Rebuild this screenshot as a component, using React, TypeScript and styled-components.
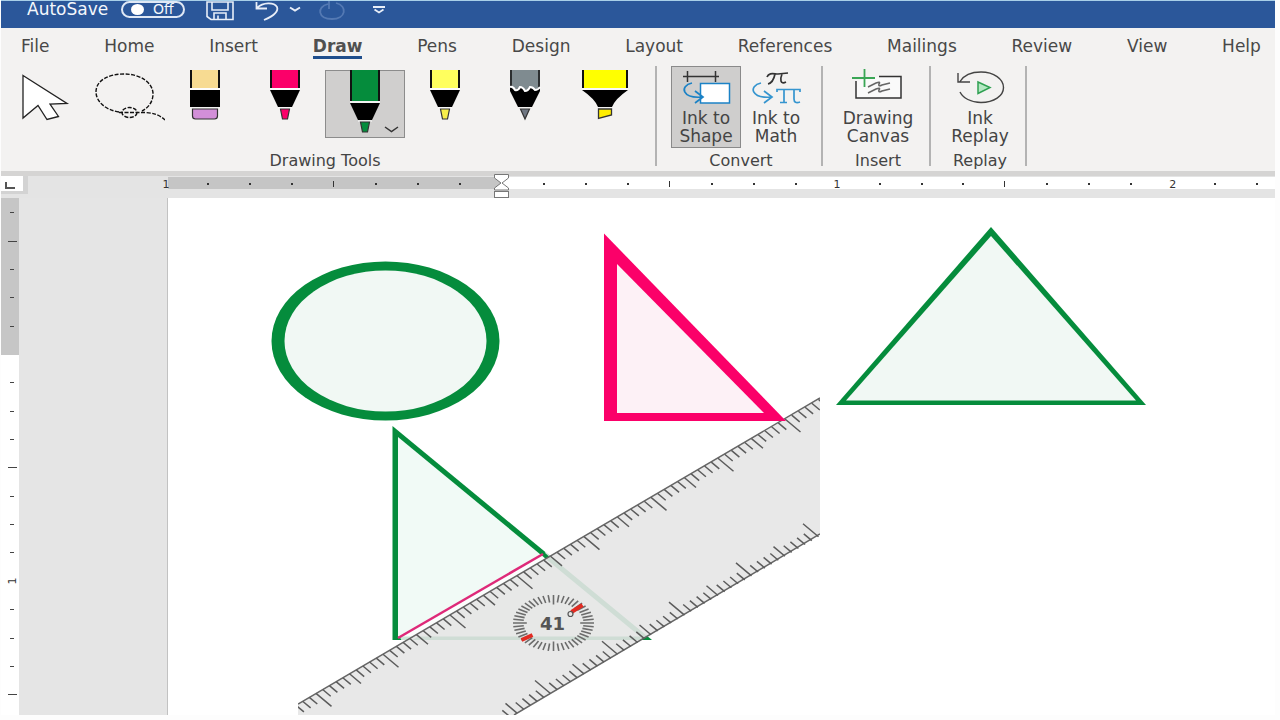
import React from "react";
import styled, { createGlobalStyle, css } from "styled-components";

const GlobalStyle = createGlobalStyle`
  *, *::before, *::after { box-sizing: border-box; }
  body { margin: 0; background: #fdfdfd; font-family: "DejaVu Sans", "Open Sans", sans-serif; }
  button { font-family: inherit; color: inherit; border: 0; padding: 0; background: none; cursor: pointer; }
  svg { display: block; }
`;

const GREEN = "#058c3c";
const PINK = "#fb0069";

const Window = styled.div`
  min-height: 100vh;
  display: flex;
  flex-direction: column;
  padding: 0 5px 5px 1px;
`;

const TitleBar = styled.header`
  height: 28px;
  display: flex;
  align-items: flex-start;
  padding-left: 26px;
  background: #2b579a;
  border-top: 1px solid #a8cfe8;
  color: #f4f7fc;
  overflow: hidden;
`;

const AutoSave = styled.label`
  display: flex;
  width: 158px;
  justify-content: space-between;
  font-size: 17px;
  line-height: 17px;
`;

const Pill = styled.span`
  display: flex;
  align-items: center;
  gap: 9px;
  width: 64px;
  height: 17px;
  padding-left: 8px;
  border: 2px solid #dfe8f5;
  border-radius: 9px;
  font-size: 14px;
  line-height: 13px;
`;

const SwitchDot = styled.input`
  appearance: none;
  width: 13px;
  height: 11px;
  margin: 0;
  border-radius: 50%;
  background: #ffffff;
`;

const QuickTools = styled.div`
  display: flex;
  padding-left: 20px;
`;

const QuickButton = styled.button<{ $width: number }>`
  width: ${(p) => p.$width}px;
  height: 22px;
`;

const Ribbon = styled.section`
  background: #f3f2f1;
  color: #444444;
`;

const Tabs = styled.nav`
  display: flex;
  justify-content: space-between;
  height: 38px;
  padding: 6px 14px 0 20px;
`;

const Tab = styled.a<{ $active?: boolean }>`
  height: 25px;
  font-size: 17px;
  line-height: 24px;
  color: #484848;
  text-decoration: none;
  ${(p) =>
    p.$active &&
    css`
      font-weight: bold;
      color: #505050;
      border-bottom: 3px solid #1f4e8c;
    `}
`;

const Groups = styled.div`
  display: flex;
  height: 105px;
`;

const Group = styled.div`
  display: flex;
  flex-direction: column;
  justify-content: space-between;
  align-items: center;
  position: relative;
  padding: 0 12px 0 14px;

  &::after {
    content: "";
    position: absolute;
    top: 0;
    right: 0;
    width: 2px;
    height: 100px;
    background: #b3b3b3;
  }
`;

const PenGroup = styled(Group)`
  padding: 4px 12px 0 4px;
`;

const GroupName = styled.div`
  font-size: 16px;
  line-height: 20px;
`;

const Row = styled.div`
  display: flex;
`;

const PenButton = styled.button<{ $selected?: boolean }>`
  width: 80px;
  height: 68px;
  ${(p) =>
    p.$selected &&
    css`
      background: #d0cfce;
      box-shadow: inset 0 0 0 1px #8c8c8c;
    `}
`;

const CommandButton = styled.button<{ $selected?: boolean }>`
  width: 70px;
  height: 82px;
  display: flex;
  flex-direction: column;
  align-items: center;
  font-size: 17px;
  line-height: 18px;
  white-space: pre-line;
  ${(p) =>
    p.$selected &&
    css`
      background: #cfcecd;
      box-shadow: inset 0 0 0 1px #8a8a8a;
    `}
`;

const WideCommand = styled(CommandButton)`
  width: 82px;
`;

const RulerRow = styled.div`
  display: flex;
  height: 27px;
  background: #e4e4e4;
  border-top: 5px solid #d5d4d3;
`;

const TabStop = styled.button`
  width: 27px;
  height: 18px;
  background: #ffffff;
  border-style: solid;
  border-color: #d3d3d3;
  border-width: 0 5px 3px 0;
`;

const HorizontalRuler = styled.svg`
  flex: 1;
  min-width: 0;
  height: 22px;
  margin-left: 132px;
  font-size: 11px;
`;

const Workspace = styled.main`
  flex: 1;
  display: flex;
  background: #e5e5e5;
`;

const VerticalRuler = styled.svg`
  width: 18px;
  align-self: stretch;
  min-height: 517px;
  background: #ffffff;
  font-size: 11px;
`;

const Page = styled.article`
  flex: 1;
  display: flex;
  margin-left: 148px;
  background: #ffffff;
  border-left: 1px solid #c2c2c2;
`;

const Drawing = styled.svg`
  flex: 1;
  min-width: 0;
  min-height: 517px;
`;

const tabs = ["File", "Home", "Insert", "Draw", "Pens", "Design", "Layout", "References", "Mailings", "Review", "View", "Help"];

function PenIcon({ color, tip = color, long = false }: { color: string; tip?: string; long?: boolean }) {
  const drop = long ? 13 : 0;
  return (
    <svg width="80" height="68">
      <rect x="25" width="30" height={18 + drop} fill={color} />
      <path d={`M26 0V${18 + drop}M54 0V${18 + drop}`} stroke="#111" strokeWidth="2" />
      <path d={`M25 ${19 + drop}H55`} stroke="#fff" strokeWidth="1.500" />
      <path d={`M25 ${20 + drop}H55L47 ${37 + drop}H33Z`} fill="#000" />
      <path d={`M33 ${38 + drop}H47`} stroke="#fff" strokeWidth="1" />
      <path d={`M35.500 ${39 + drop}H44.500L42.500 ${49 + drop}H37.500Z`} fill={tip} stroke="#333" strokeWidth="1.200" />
      {long && <path d="M60 57L66.500 61.500L73 57" fill="none" stroke="#333" strokeWidth="1.500" />}
    </svg>
  );
}

function CursorIcon() {
  return (
    <svg width="80" height="68">
      <path d="M18 5.500L62 33.500L45 34L53.500 46.500L42 49.500L33 35.500L18 48Z" fill="#fff" stroke="#222" strokeWidth="1.300" />
    </svg>
  );
}

function LassoIcon() {
  return (
    <svg width="80" height="68" fill="none" stroke="#111" strokeWidth="1.400" strokeDasharray="4 1.500">
      <path d="M34 42C20 40 11 31 11 22C11 10 24 4 39 4C56 4 68 13 68 24C68 32 63 38 57 41" />
      <path d="M34 42.500H60Q73 43 80 50" />
      <ellipse cx="44.500" cy="42.500" rx="7.500" ry="5" />
    </svg>
  );
}

function EraserIcon() {
  return (
    <svg width="80" height="68">
      <rect x="25" width="30" height="18" fill="#f7db92" />
      <path d="M26 0V18M54 0V18" stroke="#111" strokeWidth="2" />
      <path d="M25 19H55" stroke="#fff" strokeWidth="1.500" />
      <rect x="25" y="20" width="30" height="17" fill="#000" />
      <path d="M27.500 39H52.500V46Q52.500 49 49.500 49H30.500Q27.500 49 27.500 46Z" fill="#d28fd8" stroke="#333" strokeWidth="1.200" />
    </svg>
  );
}

function PencilIcon() {
  return (
    <svg width="80" height="68">
      <rect x="25" width="30" height="20" fill="#7f8b90" />
      <path d="M26 0V18M54 0V18" stroke="#111" strokeWidth="1.500" />
      <path d="M25 17L30 20L35 17L40 21L45 17L50 20L55 17V21L47 37H33L25 21Z" fill="#000" />
      <path d="M25 17Q28 16 30 20Q33 21 35 17Q38 17 40 21Q43 21 45 17Q48 17 50 20Q53 20 55 17" fill="none" stroke="#fff" strokeWidth="2" />
      <path d="M35.500 39H44.500L40 49Z" fill="#6f7782" stroke="#333" strokeWidth="1.200" />
    </svg>
  );
}

function HighlighterIcon() {
  return (
    <svg width="80" height="68">
      <rect x="17" width="46" height="18" fill="#ffff00" />
      <path d="M18 0V18M62 0V18" stroke="#111" strokeWidth="2" />
      <path d="M17 19H63" stroke="#fff" strokeWidth="1" />
      <path d="M17 20H63Q50 29 47 37H33Q30 29 17 20Z" fill="#000" />
      <path d="M33.500 39H46.500V45L33.500 48.500Z" fill="#ffee00" stroke="#333" strokeWidth="1.300" />
    </svg>
  );
}

function InkToShapeIcon() {
  return (
    <svg width="69" height="43" fill="none">
      <path d="M11 10.500H47M15.500 5V16M43.500 5V16" stroke="#333" strokeWidth="1.500" />
      <rect x="28.500" y="17.500" width="29" height="19.500" fill="#fff" stroke="#1b82c6" strokeWidth="1.500" />
      <path d="M20 17C7 20 10 33 31 31M23 25L31 31L23 37" stroke="#1b82c6" strokeWidth="1.700" />
    </svg>
  );
}

function InkToMathIcon() {
  return (
    <svg width="69" height="43" fill="none">
      <path d="M25 11C27 6 32 8 36 8L46 7M33 8C32 13 30 17 26 18M40 8C38 13 38 19 44 16" stroke="#333" strokeWidth="1.700" />
      <path d="M19 17C6 20 9 33 30 31M22 25L30 31L22 37" stroke="#3595cf" strokeWidth="1.700" />
      <path d="M35 26V23.500H58V26M42 24V36.500M38 36.500H45M52 24V33Q52 38 58 36" stroke="#3595cf" strokeWidth="1.700" />
    </svg>
  );
}

function DrawingCanvasIcon() {
  return (
    <svg width="69" height="43" fill="none">
      <path d="M35 10.500H57V32H12V15" fill="#fafafa" stroke="#333" strokeWidth="1.500" />
      <path d="M8 12H31M20.500 3V21" stroke="#3aa655" strokeWidth="1.800" />
      <path d="M24 21L32 17Q37 15 35 18Q34 21 38 19L46 17M24 27L32 23Q37 21 35 24Q34 27 38 25L46 23" stroke="#666" strokeWidth="1.500" />
    </svg>
  );
}

function ReplayIcon() {
  return (
    <svg width="69" height="43" fill="none">
      <path d="M14 26C17 32 25 36.500 35 36.500C48 36.500 57.500 30 57.500 21.500C57.500 13 48 6 35 6C26 6 18 9 14 15.500M12 7V16H24" stroke="#444" strokeWidth="1.400" />
      <path d="M32 16L44 21.500L32 27.500Z" fill="#b5e8c3" stroke="#2fa052" strokeWidth="1.500" />
    </svg>
  );
}

/* Drafting ruler laid over the page; the pitch is one major division in x and y. */
const PITCH_X = 67;
const PITCH_Y = 39.2;

function edgeTicks(originX: number, originY: number, from: number, to: number, sign: number) {
  let d = "";
  for (let i = from; i <= to; i++) {
    const reach = i % 10 === 0 ? 15.5 : i % 5 === 0 ? 11.5 : 8;
    const x = originX + (i * PITCH_X) / 10;
    const y = originY + (i * PITCH_Y) / -10;
    d += `M${x.toFixed(1)} ${y.toFixed(1)}l${sign * reach} ${(sign * reach * 0.84).toFixed(1)}`;
  }
  return d;
}

function dialTicks() {
  let d = "";
  for (let i = 0; i < 48; i++) {
    const a = (i * Math.PI) / 24;
    const inner = i % 12 === 0 ? 0.66 : 0.74;
    const c = Math.cos(a);
    const s = Math.sin(a);
    d += `M${(40.5 * c * inner).toFixed(1)} ${(28 * s * inner).toFixed(1)}L${(40.5 * c).toFixed(1)} ${(28 * s).toFixed(1)}`;
  }
  return d;
}

function DraftingRuler() {
  return (
    <g>
      <path d="M298 704L820 398V534L514 715H298Z" fill="#e5e5e5" fillOpacity="0.9" />
      <path d="M298 704L820 398M514 715L820 534" stroke="#666" strokeWidth="1.500" />
      <path d={edgeTicks(785, 419, -73, 5, 1)} stroke="#5c5c5c" strokeWidth="1.500" />
      <path d={edgeTicks(550.5, 693.5, -6, 40, -1)} stroke="#5c5c5c" strokeWidth="1.500" />
      <g transform="translate(553.500 623)">
        <path d={dialTicks()} stroke="#6c6c6c" strokeWidth="1.600" />
        <path d="M18 -11L29 -18M-32 17L-21 12" stroke="#e22b22" strokeWidth="4" />
        <text x="-1" y="7" textAnchor="middle" fontSize="18" fontWeight="bold" fill="#555">41</text>
        <circle cx="17" cy="-9" r="2.500" fill="none" stroke="#555" strokeWidth="1.200" />
      </g>
    </g>
  );
}

function PageDrawing() {
  return (
    <Drawing role="img" aria-label="Shapes and ruler">
      <defs>
        <clipPath id="rulerView">
          <rect x="298" y="390" width="522" height="325" />
        </clipPath>
      </defs>
      <g transform="translate(-168 -198)" fill="none">
        <ellipse cx="385.500" cy="341" rx="114" ry="79.500" fill={GREEN} />
        <ellipse cx="385.500" cy="341" rx="101" ry="70.500" fill="#f1f8f4" />
        <path d="M991 227L1146 405H836Z" fill={GREEN} />
        <path d="M991 236L1136 400.500H846Z" fill="#f1f8f4" />
        <path d="M392.500 426L652 640H392.500Z" fill={GREEN} />
        <path d="M398 437L640 636.500H398Z" fill="#f1faf6" />
        <path d="M400 637.500L546 552L552 558L404 645Z" fill="#fff" fillOpacity="0.800" />
        <path d="M541 552L550 560" stroke={GREEN} strokeWidth="4" />
        <path d="M398 638L543 554" stroke="#de2a79" strokeWidth="2.500" />
        <g clipPath="url(#rulerView)">
          <DraftingRuler />
        </g>
        <path d="M604 233.500L786 421H604Z" fill={PINK} />
        <path d="M617 264L764 413H617Z" fill="#fdf1f6" />
      </g>
    </Drawing>
  );
}

/* Eighth-inch marks; every fourth is a long stroke and every eighth is a numeral. */
function RulerAcross() {
  const marks = Array.from({ length: 27 }, (_, i) => i - 8);
  return (
    <HorizontalRuler role="img" aria-label="Horizontal ruler" overflow="visible">
      <svg width="100%" height="22">
        <rect x="8" y="1" width="100%" height="12" fill="#fff" />
      </svg>
      <rect x="8" y="1" width="334" height="12" fill="#c5c5c5" />
      {marks.map((m) => {
        const x = 341.5 + m * 41.95;
        if (m === 0) return null;
        if (m % 8 === 0)
          return (
            <text key={m} x={x} y="12" textAnchor="middle" fill="#333">
              {Math.abs(m / 8)}
            </text>
          );
        const long = m % 4 === 0;
        return <rect key={m} x={Math.floor(x)} y={long ? 5 : 7} width={long ? 1 : 2} height={long ? 6 : 2} fill="#333" />;
      })}
      <path d="M334.500 -1.500H348.500V2L342 7L348.500 12V14H334.500V12L341 7L334.500 2Z" fill="#fff" stroke="#777" />
      <rect x="334.500" y="15.500" width="14" height="6" fill="#fff" stroke="#777" />
    </HorizontalRuler>
  );
}

function RulerDown() {
  const marks = Array.from({ length: 18 }, (_, i) => i - 5);
  return (
    <VerticalRuler role="img" aria-label="Vertical ruler">
      <rect width="18" height="157" fill="#c6c6c6" />
      {marks.map((m) => {
        const y = Math.round(156 + m * 28.35);
        if (m === 0) return null;
        if (m % 8 === 0)
          return (
            <text key={m} transform={`translate(15 ${y}) rotate(-90)`} textAnchor="middle" fill="#333">
              {m / 8}
            </text>
          );
        const long = m % 4 === 0;
        return <rect key={m} x={long ? 7 : 9} y={y} width={long ? 9 : 4} height="1" fill="#444" />;
      })}
    </VerticalRuler>
  );
}

export default function App() {
  return (
    <>
      <GlobalStyle />
      <Window>
        <TitleBar>
          <AutoSave>
            AutoSave
            <Pill>
              <SwitchDot type="checkbox" role="switch" />
              Off
            </Pill>
          </AutoSave>
          <QuickTools>
            <QuickButton $width={50} aria-label="Save">
              <svg width="50" height="22" fill="none" stroke="#e8eef8" strokeWidth="1.600">
                <path d="M2 1H28V18.500H6L2 15.500ZM7 1V9H23V1M9 18V12H21V18M13 18V14.500" />
              </svg>
            </QuickButton>
            <QuickButton $width={32} aria-label="Undo">
              <svg width="32" height="22" fill="none" stroke="#e8eef8" strokeWidth="1.800">
                <path d="M1.500 1V7.500H12M2 7C8 1 19 1 22 6C24 11 16 16 9 19" />
              </svg>
            </QuickButton>
            <QuickButton $width={30} aria-label="Undo history">
              <svg width="30" height="22" fill="none" stroke="#e8eef8" strokeWidth="2">
                <path d="M3 6.500L8 9.500L13 6.500" />
              </svg>
            </QuickButton>
            <QuickButton $width={54} aria-label="Redo">
              <svg width="54" height="22" fill="none" stroke="#5479b3" strokeWidth="1.800">
                <path d="M11 3C-1 6 1 18 15 18C29 18 31 5 19 2M12 0V8" />
              </svg>
            </QuickButton>
            <QuickButton $width={20} aria-label="Customize Quick Access Toolbar">
              <svg width="20" height="22" fill="none" stroke="#e8eef8" strokeWidth="1.800">
                <path d="M2 6H14M3.500 8.500L8 11.500L12.500 8.500" />
              </svg>
            </QuickButton>
          </QuickTools>
        </TitleBar>
        <Ribbon>
          <Tabs>
            {tabs.map((name) => (
              <Tab key={name} href={`#${name.toLowerCase()}`} $active={name === "Draw"}>
                {name}
              </Tab>
            ))}
          </Tabs>
          <Groups>
            <PenGroup>
              <Row>
                <PenButton aria-label="Select"><CursorIcon /></PenButton>
                <PenButton aria-label="Lasso select"><LassoIcon /></PenButton>
                <PenButton aria-label="Eraser"><EraserIcon /></PenButton>
                <PenButton aria-label="Pink pen"><PenIcon color={PINK} /></PenButton>
                <PenButton aria-label="Green pen" $selected><PenIcon color={GREEN} long /></PenButton>
                <PenButton aria-label="Yellow pen"><PenIcon color="#ffff5e" tip="#f7ee4a" /></PenButton>
                <PenButton aria-label="Pencil"><PencilIcon /></PenButton>
                <PenButton aria-label="Highlighter"><HighlighterIcon /></PenButton>
              </Row>
              <GroupName>Drawing Tools</GroupName>
            </PenGroup>
            <Group>
              <Row>
                <CommandButton $selected><InkToShapeIcon />{"Ink to\nShape"}</CommandButton>
                <CommandButton><InkToMathIcon />{"Ink to\nMath"}</CommandButton>
              </Row>
              <GroupName>Convert</GroupName>
            </Group>
            <Group>
              <WideCommand><DrawingCanvasIcon />{"Drawing\nCanvas"}</WideCommand>
              <GroupName>Insert</GroupName>
            </Group>
            <Group>
              <CommandButton><ReplayIcon />{"Ink\nReplay"}</CommandButton>
              <GroupName>Replay</GroupName>
            </Group>
          </Groups>
        </Ribbon>
        <RulerRow>
          <TabStop aria-label="Tab stop">
            <svg width="20" height="14">
              <path d="M5 5V11H14" fill="none" stroke="#555" strokeWidth="2" />
            </svg>
          </TabStop>
          <RulerAcross />
        </RulerRow>
        <Workspace>
          <RulerDown />
          <Page>
            <PageDrawing />
          </Page>
        </Workspace>
      </Window>
    </>
  );
}
